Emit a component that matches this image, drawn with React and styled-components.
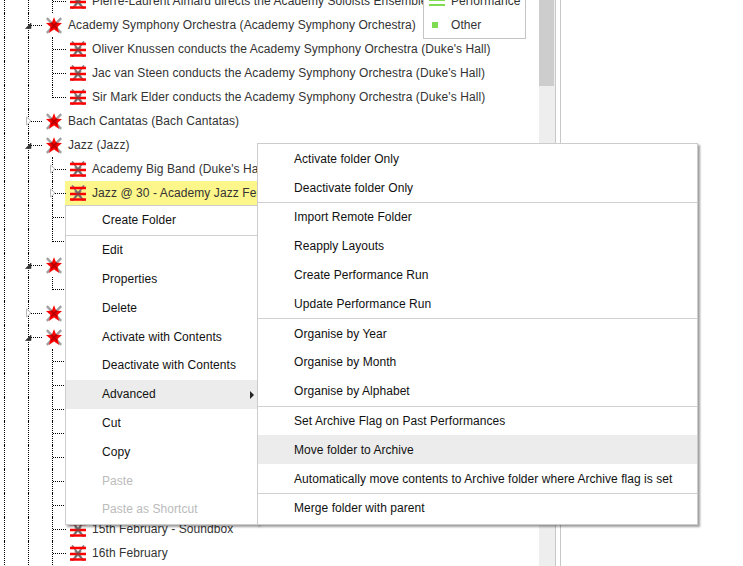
import React from "react";
import styled, { createGlobalStyle } from "styled-components";

const Global = createGlobalStyle`
  html, body { margin: 0; padding: 0; height: 100%; overflow: hidden; background: #fff; }
  body { font-family: "Liberation Sans", Arial, sans-serif; font-size: 12px; color: #333; }
  #root { height: 100%; }
`;

const Page = styled.div`
  position: relative;
  display: flex;
  width: 743px;
  height: 566px;
  overflow: hidden;
`;
const TreePane = styled.div`
  position: relative;
  width: 539px;
  flex: none;
  overflow: hidden;
`;
const Tree = styled.div`
  margin-top: -11px;
  padding-left: 4px;
`;
const Row = styled.div`
  display: flex;
  height: 24px;
`;
const Guide = styled.div`
  width: 24px;
  flex: none;
  box-sizing: border-box;
  border-left: 1px dotted #000;
`;
const Branch = styled.div`
  position: relative;
  width: 18px;
  flex: none;
  box-sizing: border-box;
  &::before {
    content: "";
    position: absolute;
    left: 0;
    top: 0;
    height: ${(p) => (p.$last ? "13px" : "24px")};
    border-left: 1px dotted #000;
  }
  &::after {
    content: "";
    position: absolute;
    left: 1px;
    top: 12px;
    width: 13px;
    border-top: 1px dotted #000;
  }
`;
const Expander = styled.svg`
  position: absolute;
  left: -3px;
  top: 7px;
  width: 7px;
  height: 10px;
  z-index: 1;
`;
const Cell = styled.div`
  display: flex;
  align-items: center;
  height: 24px;
  flex: none;
  background: ${(p) => (p.$selected ? "#fdf68a" : "transparent")};
  margin-left: ${(p) => (p.$selected ? "-5px" : "0")};
  padding-left: ${(p) => (p.$selected ? "5px" : "0")};
  padding-right: ${(p) => (p.$selected ? "6px" : "0")};
`;
const Label = styled.span`
  margin-left: 6px;
  white-space: nowrap;
  color: #333;
  line-height: 24px;
  letter-spacing: 0.08px;
`;
const Legend = styled.div`
  position: absolute;
  left: 423px;
  top: -11px;
  width: 103px;
  height: 50px;
  box-sizing: border-box;
  border: 1px solid #c4c4c4;
  border-top: 0;
  background: #fff;
`;
const LegendRow = styled.div`
  display: flex;
  align-items: center;
  height: 24px;
  color: #333;
  letter-spacing: 0.08px;
`;
const LegendIcon = styled.div`
  width: 27px;
  flex: none;
  display: flex;
  justify-content: center;
  padding-right: 5px;
  box-sizing: border-box;
`;
const Swatch = styled.div`
  width: ${(p) => (p.$lines ? "16px" : "6px")};
  height: ${(p) => (p.$lines ? "2px" : "6px")};
  margin-left: ${(p) => (p.$lines ? "3px" : "0")};
  background: #7fdb52;
  box-shadow: ${(p) => (p.$lines ? "0 5px 0 #7fdb52" : "none")};
  transform: translateY(${(p) => (p.$lines ? "-1px" : "0")});
`;
const Scrollbar = styled.div`
  width: 16px;
  flex: none;
  background: #eeeeee;
`;
const Thumb = styled.div`
  height: 86px;
  width: 15px;
  background: #cdcdcd;
`;
const Splitter = styled.div`
  width: 4px;
  flex: none;
  border-left: 1px solid #c8c8c8;
  border-right: 1px solid #c8c8c8;
`;
const Menu = styled.div`
  position: absolute;
  left: ${(p) => p.$left}px;
  top: ${(p) => p.$top}px;
  width: ${(p) => p.$width}px;
  height: ${(p) => p.$height}px;
  box-sizing: border-box;
  padding-top: ${(p) => p.$pad}px;
  background: #fff;
  border: 1px solid #ccc;
  box-shadow: 2px 2px 2px rgba(0, 0, 0, 0.38);
  z-index: ${(p) => p.$z};
`;
const Item = styled.div`
  position: relative;
  display: flex;
  align-items: center;
  height: 28.8px;
  padding-left: 36px;
  color: ${(p) => (p.$disabled ? "#bbb" : "#111")};
  background: ${(p) => (p.$active ? "#ececec" : "transparent")};
  white-space: nowrap;
  letter-spacing: 0.05px;
`;
const Sep = styled.div`
  height: 1px;
  background: #d0d0d0;
`;
const Arrow = styled.span`
  position: absolute;
  right: 3px;
  top: 11px;
  width: 0;
  height: 0;
  border-left: 4px solid #222;
  border-top: 4px solid transparent;
  border-bottom: 4px solid transparent;
`;

const StarIcon = () => (
  <svg width="16" height="17" viewBox="0 0 16 17" style={{ flex: "none" }}>
    <path d="M0.8 1.2L15.2 15.8M15.2 1.2L0.8 15.8" stroke="#a0a0a0" strokeWidth="2.4" />
    <path d="M8 0.2L10.2 5.8L16 6L11.5 9.9L13.2 16L8 12.6L2.8 16L4.5 9.9L0 6L5.8 5.8Z" fill="#f00" />
    <path d="M5 5.5L11 11.5M11 5.5L5 11.5" stroke="#600" strokeWidth="2" opacity="0.45" />
  </svg>
);
const BarIcon = () => (
  <svg width="16" height="16" viewBox="0 0 16 16" style={{ flex: "none" }}>
    <path d="M2 0.5L14 16M14 0.5L2 16" stroke="#808080" strokeWidth="2" />
    <path d="M0 3H16M0 9H16M0 14.5H16" stroke="#f00" strokeWidth="2.6" />
    <path d="M5 6L11 13M11 6L5 13" stroke="#555" strokeWidth="2" opacity="0.55" />
  </svg>
);
const Toggle = ({ open }) => (
  <Expander viewBox="0 0 7 10">
    {open ? (
      <path d="M0.5 8.5L6 3V8.5Z" fill="#333" stroke="#333" strokeWidth="0.6" />
    ) : (
      <path d="M1.5 1L6 5L1.5 9Z" fill="#fff" stroke="#bbb" />
    )}
  </Expander>
);

const StarRow = ({ text, open }) => (
  <Row>
    <Guide />
    <Branch>
      <Toggle open={open} />
    </Branch>
    <Cell>
      <StarIcon />
      <Label>{text}</Label>
    </Cell>
  </Row>
);
const LeafRow = ({ text, last, closed, selected }) => (
  <Row>
    <Guide />
    <Guide />
    <Branch $last={last}>{closed && <Toggle />}</Branch>
    <Cell $selected={selected}>
      <BarIcon />
      <Label>{text}</Label>
    </Cell>
  </Row>
);

const mainMenu = [
  [{ t: "Create Folder" }],
  [
    { t: "Edit" },
    { t: "Properties" },
    { t: "Delete" },
    { t: "Activate with Contents" },
    { t: "Deactivate with Contents" },
    { t: "Advanced", active: true, arrow: true },
    { t: "Cut" },
    { t: "Copy" },
    { t: "Paste", disabled: true },
    { t: "Paste as Shortcut", disabled: true },
  ],
];
const subMenu = [
  [{ t: "Activate folder Only" }, { t: "Deactivate folder Only" }],
  [
    { t: "Import Remote Folder" },
    { t: "Reapply Layouts" },
    { t: "Create Performance Run" },
    { t: "Update Performance Run" },
  ],
  [{ t: "Organise by Year" }, { t: "Organise by Month" }, { t: "Organise by Alphabet" }],
  [
    { t: "Set Archive Flag on Past Performances" },
    { t: "Move folder to Archive", active: true },
    { t: "Automatically move contents to Archive folder where Archive flag is set" },
  ],
  [{ t: "Merge folder with parent" }],
];

const MenuBody = ({ groups }) =>
  groups.map((g, i) => (
    <React.Fragment key={i}>
      {i > 0 && <Sep />}
      {g.map((it) => (
        <Item key={it.t} $active={it.active} $disabled={it.disabled}>
          {it.t}
          {it.arrow && <Arrow />}
        </Item>
      ))}
    </React.Fragment>
  ));

export default function App() {
  return (
    <Page>
      <Global />
      <TreePane>
        <Tree>
          <LeafRow text="Pierre-Laurent Aimard directs the Academy Soloists Ensemble (Duke's Hall)" />
          <StarRow open text="Academy Symphony Orchestra (Academy Symphony Orchestra)" />
          <LeafRow text="Oliver Knussen conducts the Academy Symphony Orchestra (Duke's Hall)" />
          <LeafRow text="Jac van Steen conducts the Academy Symphony Orchestra (Duke's Hall)" />
          <LeafRow last text="Sir Mark Elder conducts the Academy Symphony Orchestra (Duke's Hall)" />
          <StarRow text="Bach Cantatas (Bach Cantatas)" />
          <StarRow open text="Jazz (Jazz)" />
          <LeafRow closed text="Academy Big Band (Duke's Hall)" />
          <LeafRow closed selected text="Jazz @ 30 - Academy Jazz Festival (Duke's Hall)" />
          <LeafRow text="Jazz Showcase" />
          <LeafRow last text="Jazz Finale" />
          <StarRow open text="Opera (Opera)" />
          <LeafRow last text="Opera Scenes" />
          <StarRow text="Piano (Piano)" />
          <StarRow open text="Soundbox (Soundbox)" />
          <LeafRow text="8th February" />
          <LeafRow text="9th February" />
          <LeafRow text="10th February" />
          <LeafRow text="11th February" />
          <LeafRow text="12th February" />
          <LeafRow text="13th February" />
          <LeafRow text="14th February" />
          <LeafRow text="15th February - Soundbox" />
          <LeafRow text="16th February" />
        </Tree>
        <Legend>
          <LegendRow>
            <LegendIcon>
              <Swatch $lines />
            </LegendIcon>
            Performance
          </LegendRow>
          <LegendRow>
            <LegendIcon>
              <Swatch />
            </LegendIcon>
            Other
          </LegendRow>
        </Legend>
      </TreePane>
      <Scrollbar>
        <Thumb />
      </Scrollbar>
      <Splitter />
      <Menu $left={65} $top={205} $width={193} $height={320} $z={1} $pad={0}>
        <MenuBody groups={mainMenu} />
      </Menu>
      <Menu $left={257} $top={143} $width={441} $height={382} $z={2} $pad={0.5}>
        <MenuBody groups={subMenu} />
      </Menu>
    </Page>
  );
}
